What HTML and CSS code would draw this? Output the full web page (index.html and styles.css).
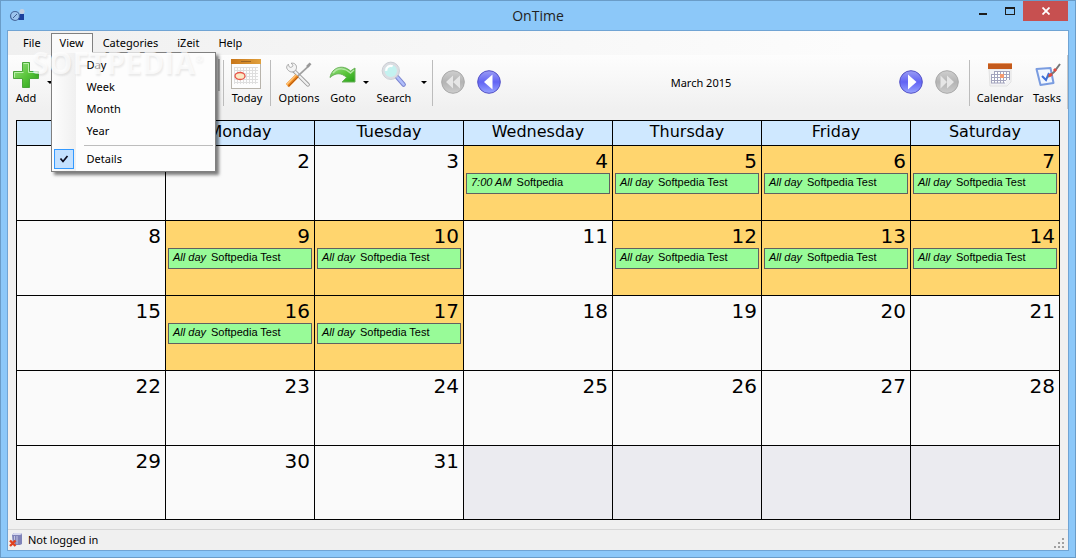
FILE: index.html
```html
<!DOCTYPE html>
<html lang="en">
<head>
<meta charset="utf-8">
<title>OnTime</title>
<link rel="stylesheet" href="styles.css">
</head>
<body>
<svg class="defs" aria-hidden="true">
  <defs>
    <linearGradient id="blue" x1="0" y1="0" x2="0" y2="1"><stop offset="0" stop-color="#9a9cf4"/><stop offset=".5" stop-color="#6264f4"/><stop offset="1" stop-color="#98a4ff"/></linearGradient>
    <linearGradient id="grey" x1="0" y1="0" x2="0" y2="1"><stop offset="0" stop-color="#cfcfcf"/><stop offset=".5" stop-color="#b4b4b4"/><stop offset="1" stop-color="#cdcdcd"/></linearGradient>
    <linearGradient id="green" x1="0" y1="0" x2="1" y2="1"><stop offset="0" stop-color="#9be08a"/><stop offset=".5" stop-color="#5cc63c"/><stop offset="1" stop-color="#25a018"/></linearGradient>
    <linearGradient id="orange" x1="0" y1="0" x2="1" y2="0"><stop offset="0" stop-color="#c8761a"/><stop offset="1" stop-color="#e0a03c"/></linearGradient>
    <pattern id="cells" width="3" height="3" patternUnits="userSpaceOnUse"><path d="M0 .5h3M.5 0v3" stroke="#dedede" fill="none"/></pattern>
  </defs>
</svg>
<div class="window">
  <header class="titlebar">
    <svg class="app-icon" viewBox="0 0 16 16" aria-hidden="true"><circle cx="6" cy="9" r="4.500" fill="#9cc4ee" stroke="#47689c" stroke-width="1.200"/><path d="M4 11l4-4" stroke="#3f5f92"/><circle cx="13" cy="4.500" r="2.500" fill="#c5cfe0"/><path d="M11 7h4v6h-5l-1-1 2-2z" fill="#1d3f9c"/></svg>
    <h1 class="title">OnTime</h1>
    <div class="controls">
      <button class="ctl" aria-label="Minimize"><span class="min"></span></button>
      <button class="ctl" aria-label="Maximize"><span class="max"></span></button>
      <button class="ctl close" aria-label="Close"><svg width="8" height="8" viewBox="0 0 8 8"><path d="M.5.5l7 7M7.500.5l-7 7" stroke="#fff" stroke-width="1.800"/></svg></button>
    </div>
  </header>
  <main class="client">
    <nav class="menubar">
      <button class="menu-btn">File</button>
      <div class="menu-wrap">
        <button class="menu-btn open">View</button>
        <div class="menu">
          <button class="item">Day</button>
          <button class="item">Week</button>
          <button class="item">Month</button>
          <button class="item">Year</button>
          <hr class="menu-line">
          <button class="item checked"><span class="check"><svg width="10" height="8" viewBox="0 0 10 8"><path d="M1.500 3.500l2.500 3 4.500-5.500" fill="none" stroke="#0a0a1e" stroke-width="1.700"/></svg></span>Details</button>
        </div>
      </div>
      <button class="menu-btn">Categories</button>
      <button class="menu-btn">iZeit</button>
      <button class="menu-btn">Help</button>
    </nav>
    <div class="toolbar">
      <button class="tool add"><svg class="ico" viewBox="0 0 32 32"><path d="M12.500 4.500h7v9h9v7h-9v9h-7v-9h-9v-7h9z" fill="url(#green)" stroke="#4aa53a"/><path d="M13.500 5.500h5v9h9M4.500 19.500v-5h9" fill="none" stroke="#b9f0a8"/></svg>Add</button>
      <button class="drop wide" aria-label="Add options"></button>
      <div class="covered"></div>
      <span class="sep"></span>
      <button class="tool short"><svg class="ico" viewBox="0 0 32 32"><rect x=".5" y="1.500" width="29" height="29" fill="#fdfdfd" stroke="#b8b4ac"/><path d="M0 1h30v5H0z" fill="url(#orange)"/><path d="M10 3.500h10" stroke="#9b6422"/><path d="M3 9h24v17H3z" fill="url(#cells)"/><ellipse cx="9" cy="18" rx="5" ry="3.500" fill="#fbe9c4" stroke="#e8554a" stroke-width="1.300"/></svg>Today</button>
      <span class="sep"></span>
      <button class="tool mid"><svg class="ico" viewBox="-2 -3 36 36"><path d="M9 10l17 17" stroke="#9a9a9a" stroke-width="4.500" stroke-linecap="round"/><path d="M9 10l17 17" stroke="#f0f0f0" stroke-width="2.500" stroke-linecap="round"/><path d="M4 4c1 4 2 4 4 3s1-3-1-4c4-1 7 2 6 6s-6 5-9 2-2-5 0-7z" fill="#f4f4f4" stroke="#9c9c9c"/><path d="M14 18L28 5" stroke="#a0a0a0" stroke-width="2"/><path d="M25 7l4-4" stroke="#999" stroke-width="3"/><path d="M3 28l11-11" stroke="#f08a1c" stroke-width="5"/><path d="M2 27L13 16" stroke="#ffc880" stroke-width="1.500"/><path d="M4 29l11-11" stroke="#9b430c"/></svg>Options</button>
      <button class="tool goto"><svg class="ico" viewBox="0 0 32 32"><path d="M3 19.500C5 9 16 6 23.500 13l4.500-3v14H15l4.500-4.500C14 14 8 15 3 19.500z" fill="url(#green)" stroke="#6ab15a"/><path d="M6 15c5-6 12-5 17.500 0l3.500-3" fill="none" stroke="#b4e6a5" stroke-width="1.500"/></svg>Goto</button>
      <button class="drop" aria-label="Goto options"></button>
      <button class="tool search"><svg class="ico" viewBox="-1 -3 35 35"><path d="M20 18l7 8" stroke="#7c86d0" stroke-width="5" stroke-linecap="round"/><path d="M20 18l7 8" stroke="#b0befb" stroke-width="2.800" stroke-linecap="round"/><circle cx="13" cy="11" r="8" fill="#c4f2f0" stroke="#dcdde2" stroke-width="2.500"/><circle cx="13" cy="11" r="9.500" fill="none" stroke="#b4bac2" stroke-width=".7"/><path d="M8 11a5 5 0 0 1 7-5" stroke="#fff" stroke-width="2.500" fill="none"/></svg>Search</button>
      <button class="drop mid-drop" aria-label="Search options"></button>
      <span class="sep"></span>
      <button class="nav" aria-label="Previous year"><svg viewBox="0 0 24 24"><circle cx="12" cy="12" r="11.300" fill="url(#grey)" stroke="#a9a9a9"/><path d="M12 5.500v13L5 12zM19 5.500v13L12 12z" fill="#e6e6e6"/></svg></button>
      <button class="nav" aria-label="Previous month"><svg viewBox="0 0 24 24"><circle cx="12" cy="12" r="11.300" fill="url(#blue)" stroke="#5553c6"/><path d="M15.500 4.500v15L7 12z" fill="#fff"/></svg></button>
      <div class="period">March 2015</div>
      <button class="nav" aria-label="Next month"><svg viewBox="0 0 24 24"><circle cx="12" cy="12" r="11.300" fill="url(#blue)" stroke="#5553c6"/><path d="M9 4.500v15l8.500-7.500z" fill="#fff"/></svg></button>
      <button class="nav" aria-label="Next year"><svg viewBox="0 0 24 24"><circle cx="12" cy="12" r="11.300" fill="url(#grey)" stroke="#a9a9a9"/><path d="M12 5.500v13l7-6.500zM5.500 5.500v13l6.500-6.500z" fill="#e6e6e6"/></svg></button>
      <span class="sep"></span>
      <button class="tool calendar"><svg class="ico" viewBox="0 0 32 32"><path d="M5 11h22v13l-4 4H6z" fill="#f3f3f5" stroke="#e2e2e2"/><path d="M4 5h24v6H4z" fill="#c45a1c"/><path d="M4 5.500h24" stroke="#e69763"/><path d="M11 13h15v9h-4v3H7v-9h4z" fill="#fff"/><path d="M10 13.500h16M7 16.500h19M7 19.500h19M7 22.500h15M7 25h14M7.500 16v9M10.500 13v12M13.500 13v12M16.500 13v12M19.500 13v12M22.500 13v9M25.500 13v9" stroke="#a3a4bd" fill="none"/><path d="M16 16h4v4h-4z" fill="#f49a70"/></svg>Calendar</button>
      <button class="tool short"><svg class="ico" viewBox="0 0 32 32"><path d="M5.500 11l14-1 3 15-13 2z" fill="#f2f7ff" stroke="#7a9ce0" stroke-width="2" stroke-linejoin="round"/><path d="M11 18l4 4 3-7" fill="none" stroke="#3d6fd8" stroke-width="2"/><path d="M17 19l6-5 6-8" stroke="#777" stroke-width="2" fill="none"/><path d="M18 18l3-2M23 13l2-2" stroke="#e24a40" stroke-width="3"/></svg>Tasks</button>
    </div>
    <div class="watermark" aria-hidden="true">SOFTPEDIA<sup>®</sup></div>
    <section class="month">
      <table class="grid">
        <thead><tr><th>Sunday</th><th>Monday</th><th>Tuesday</th><th>Wednesday</th><th>Thursday</th><th>Friday</th><th>Saturday</th></tr></thead>
        <tbody>
          <tr>
            <td><div class="num">1</div></td><td><div class="num">2</div></td><td><div class="num">3</div></td>
            <td class="busy"><div class="num">4</div><div class="event"><em>7:00 AM</em>Softpedia</div></td>
            <td class="busy"><div class="num">5</div><div class="event"><em>All day</em>Softpedia Test</div></td>
            <td class="busy"><div class="num">6</div><div class="event"><em>All day</em>Softpedia Test</div></td>
            <td class="busy"><div class="num">7</div><div class="event"><em>All day</em>Softpedia Test</div></td>
          </tr>
          <tr>
            <td><div class="num">8</div></td>
            <td class="busy"><div class="num">9</div><div class="event"><em>All day</em>Softpedia Test</div></td>
            <td class="busy"><div class="num">10</div><div class="event"><em>All day</em>Softpedia Test</div></td>
            <td><div class="num">11</div></td>
            <td class="busy"><div class="num">12</div><div class="event"><em>All day</em>Softpedia Test</div></td>
            <td class="busy"><div class="num">13</div><div class="event"><em>All day</em>Softpedia Test</div></td>
            <td class="busy"><div class="num">14</div><div class="event"><em>All day</em>Softpedia Test</div></td>
          </tr>
          <tr>
            <td><div class="num">15</div></td>
            <td class="busy"><div class="num">16</div><div class="event"><em>All day</em>Softpedia Test</div></td>
            <td class="busy"><div class="num">17</div><div class="event"><em>All day</em>Softpedia Test</div></td>
            <td><div class="num">18</div></td><td><div class="num">19</div></td><td><div class="num">20</div></td><td><div class="num">21</div></td>
          </tr>
          <tr><td><div class="num">22</div></td><td><div class="num">23</div></td><td><div class="num">24</div></td><td><div class="num">25</div></td><td><div class="num">26</div></td><td><div class="num">27</div></td><td><div class="num">28</div></td></tr>
          <tr class="last"><td><div class="num">29</div></td><td><div class="num">30</div></td><td><div class="num">31</div></td><td class="off"></td><td class="off"></td><td class="off"></td><td class="off"></td></tr>
        </tbody>
      </table>
    </section>
    <footer class="status">
      <svg width="14" height="14" viewBox="0 0 14 14" aria-hidden="true"><path d="M3 2l2-2h7l1 1v10l-2 1H4z" fill="#8083b8"/><path d="M3 2l2-2h7l1 1-2 1z" fill="#d5d7ee"/><path d="M5.500 3v8M8 3v8" stroke="#c3c5e2"/><path d="M1 7.500l5.500 5.500M6.500 7.500L1 13" stroke="#e0401f" stroke-width="2.400"/></svg>
      <span>Not logged in</span>
      <svg class="grip" width="12" height="12" viewBox="0 0 12 12" aria-hidden="true"><path d="M8 1h2v2H8zM4 5h2v2H4zM8 5h2v2H8zM0 9h2v2H0zM4 9h2v2H4zM8 9h2v2H8z" fill="#a0a0a0"/></svg>
    </footer>
  </main>
</div>
</body>
</html>
```
FILE: styles.css
```css
* { box-sizing: border-box; }
body { margin: 0; font: 11px/16px "Noto Sans", "Open Sans", sans-serif; color: #000; }
button { font: inherit; color: inherit; border: 0; padding: 0; margin: 0; background: none; }
.defs { position: absolute; width: 0; height: 0; }

.window { display: flex; flex-direction: column; min-height: 100vh; padding: 0 7px 7px; background: #8cc8f9; border: 1px solid #6a9cc8; }
.titlebar { display: grid; grid-template-columns: 1fr auto 1fr; height: 29px; }
.app-icon { width: 16px; height: 16px; margin: 6px 0 0 1px; }
.title { margin: 0; font: 14px/30px "Open Sans", sans-serif; color: #222; }
.controls { display: flex; justify-content: flex-end; align-items: flex-start; }
.ctl { display: flex; align-items: center; justify-content: center; width: 27px; height: 20px; }
.min { width: 8px; height: 2px; margin-top: 6px; background: #1d1d1d; }
.max { width: 10px; height: 8px; border: 1px solid #1d1d1d; border-top-width: 2px; }
.close { width: 45px; background: #c75050; }

.client { position: relative; flex: 1; display: flex; flex-direction: column; background: #f0f0f0; border: 1px solid #70a4d4; margin: 0 -1px -1px; }
.menubar { display: flex; align-items: flex-start; gap: 1px; height: 24px; padding: 2px 6px 0; background: linear-gradient(90deg, #f0f0f0, #fcfcfc 80%); }
.menu-wrap { position: relative; }
.menu-btn { height: 20px; padding: 0 9px; line-height: 20px; }
.menu-btn.open { position: relative; z-index: 6; padding: 0 8px 1px; line-height: 18px; background: #fafafa; border: 1px solid #808080; border-bottom: 0; }
.menu { position: absolute; z-index: 5; top: 19px; left: 0; width: 165px; padding: 1px 2px; background: linear-gradient(90deg, #fcfcfc, #f0f0f0) 2px 0 / 22px 100% no-repeat #fdfdfd; border: 1px solid #808080; box-shadow: 3px 3px 3px rgba(0, 0, 0, .5); }
.item { display: flex; align-items: center; width: 100%; height: 22px; padding-left: 33px; }
.item.checked { padding-left: 0; }
.check { display: flex; align-items: center; justify-content: center; width: 20px; height: 20px; margin-right: 13px; background: #c4e1ff; border: 1px solid #3399ff; }
.menu-line { margin: 3px 0 2px 30px; border: 0; border-top: 1px solid #bdbdbd; }

.toolbar { display: flex; height: 54px; padding-left: 1px; background: linear-gradient(#fdfdfd, #f7f7f7 50%, #f0f0f0); border-right: 1px solid #c8c8c8; }
.tool { display: flex; flex-direction: column; align-items: center; padding-top: 3px; white-space: nowrap; }
.ico { display: block; width: 32px; height: 32px; }
.add { width: 34px; }
.short { width: 40px; }
.mid { width: 50px; }
.goto { width: 38px; }
.search { width: 48px; }
.calendar { width: 54px; }
.drop { display: flex; align-items: center; justify-content: center; width: 8px; }
.drop::after { content: ""; border: 3px solid transparent; border-top-color: #000; border-bottom: 0; }
.wide { width: 14px; }
.mid-drop { width: 11px; }
.covered { width: 163px; height: 32px; margin-top: 4px; border-right: 2px solid #b8b8b8; }
.sep { width: 1px; height: 46px; margin: 5px 3px 0; background: #bcbcbc; }
.nav { display: flex; align-items: center; justify-content: center; width: 36px; padding-right: 2px; }
.nav svg { width: 24px; height: 24px; }
.period { flex: 1; line-height: 56px; text-align: center; }

.watermark { position: absolute; z-index: 8; top: 14px; left: 24px; font: bold 30px/36px "Open Sans", sans-serif; color: rgba(255, 255, 255, .7); text-shadow: 1px 2px 2px rgba(0, 0, 0, .08); pointer-events: none; }
.watermark sup { font-size: 10px; vertical-align: 12px; line-height: 0; }

.month { flex: 1; display: flex; align-items: flex-start; padding: 11px 8px 8px; }
.grid { flex: 1; width: 100%; border-collapse: collapse; table-layout: fixed; background: #fafafa; }
.grid th, .grid td { border: 1px solid #000; padding: 0; }
.grid th { height: 25px; background: #cfe8ff; font: 16px/22px "DejaVu Sans", sans-serif; vertical-align: top; }
.grid td { height: 75px; vertical-align: top; }
.grid .last td { height: 74px; }
.num { padding: 3px 4px 0 0; font: 20px/24px "DejaVu Sans", sans-serif; text-align: right; }
.busy { background: #ffd56e; }
.off { background: #ebebf0; }
.event { height: 21px; margin: 0 2px; padding-left: 4px; background: #98fb98; border: 1px solid #606060; font: 11px/17px "Liberation Sans", sans-serif; white-space: nowrap; }
.event em { margin-right: 5px; }

.status { display: flex; align-items: center; gap: 5px; height: 21px; padding: 0 2px 0 1px; border-top: 1px solid #d7d7d7; }
.grip { margin: 6px 0 0 auto; }
```
